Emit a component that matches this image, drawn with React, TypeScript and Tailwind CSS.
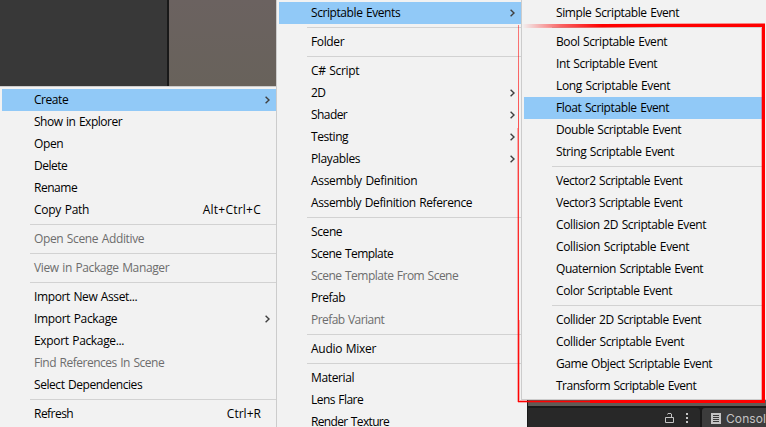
import React from "react";

type Item = { label: string; w: number; key?: string; sub?: boolean; off?: boolean; on?: boolean } | null;

const assetMenu: Item[] = [
  { label: "Create", w: 34, sub: true, on: true },
  { label: "Show in Explorer", w: 88 },
  { label: "Open", w: 29 },
  { label: "Delete", w: 33 },
  { label: "Rename", w: 43 },
  { label: "Copy Path", w: 55, key: "Alt+Ctrl+C" },
  null,
  { label: "Open Scene Additive", w: 110, off: true },
  null,
  { label: "View in Package Manager", w: 135, off: true },
  null,
  { label: "Import New Asset...", w: 103 },
  { label: "Import Package", w: 83, sub: true },
  { label: "Export Package...", w: 90 },
  { label: "Find References In Scene", w: 130, off: true },
  { label: "Select Dependencies", w: 108 },
  null,
  { label: "Refresh", w: 39, key: "Ctrl+R" },
];

const createMenu: Item[] = [
  { label: "Scriptable Events", w: 89, sub: true, on: true },
  null,
  { label: "Folder", w: 33 },
  null,
  { label: "C# Script", w: 48 },
  { label: "2D", w: 14, sub: true },
  { label: "Shader", w: 36, sub: true },
  { label: "Testing", w: 37, sub: true },
  { label: "Playables", w: 49, sub: true },
  { label: "Assembly Definition", w: 106 },
  { label: "Assembly Definition Reference", w: 161 },
  null,
  { label: "Scene", w: 31 },
  { label: "Scene Template", w: 82 },
  { label: "Scene Template From Scene", w: 147, off: true },
  { label: "Prefab", w: 34 },
  { label: "Prefab Variant", w: 73, off: true },
  null,
  { label: "Audio Mixer", w: 65 },
  null,
  { label: "Material", w: 43 },
  { label: "Lens Flare", w: 52 },
  { label: "Render Texture", w: 78 },
];

const eventMenu: Item[] = [
  { label: "Simple Scriptable Event", w: 123 },
  null,
  { label: "Bool Scriptable Event", w: 111 },
  { label: "Int Scriptable Event", w: 101 },
  { label: "Long Scriptable Event", w: 114 },
  { label: "Float Scriptable Event", w: 113, on: true },
  { label: "Double Scriptable Event", w: 125 },
  { label: "String Scriptable Event", w: 118 },
  null,
  { label: "Vector2 Scriptable Event", w: 126 },
  { label: "Vector3 Scriptable Event", w: 126 },
  { label: "Collision 2D Scriptable Event", w: 150 },
  { label: "Collision Scriptable Event", w: 133 },
  { label: "Quaternion Scriptable Event", w: 147 },
  { label: "Color Scriptable Event", w: 116 },
  null,
  { label: "Collider 2D Scriptable Event", w: 145 },
  { label: "Collider Scriptable Event", w: 128 },
  { label: "Game Object Scriptable Event", w: 156 },
  { label: "Transform Scriptable Event", w: 140 },
];

/* Label whose letter spacing is fitted to its column width. */
function Label({ text, width }: { text: string; width: number }) {
  const ref = React.useRef<HTMLSpanElement>(null);
  const [gap, setGap] = React.useState(0);
  React.useLayoutEffect(() => {
    if (ref.current) setGap((width + 0.2 - ref.current.getBoundingClientRect().width) / text.length);
  }, [text, width]);
  return (
    <span ref={ref} className="whitespace-pre [word-spacing:0.8px]" style={{ letterSpacing: gap }}>
      {text}
    </span>
  );
}

function Menu({ items }: { items: Item[] }) {
  return (
    <div className="flex flex-col text-[12px] leading-[22px] text-black">
      {items.map((it, i) =>
        it === null ? (
          <div key={i} className="flex h-[7px] shrink-0 items-center pl-7">
            <div className="h-px flex-1 bg-[#d2d2d2]" />
          </div>
        ) : (
          <div
            key={i}
            className={`flex h-[22px] shrink-0 items-center pl-7 ${it.on ? "bg-[#91c9f7]" : ""} ${it.off ? "text-[#6d6d6d]" : ""}`}
          >
            <div className="flex flex-1 pl-1">
              <Label text={it.label} width={it.w} />
            </div>
            {it.key && (
              <div className="flex pr-[15px]">
                <Label text={it.key} width={it.key.length > 6 ? 58 : 34} />
              </div>
            )}
            {it.sub && (
              <svg className="mr-[6px] h-2 w-[5px]" viewBox="0 0 5 8" fill="none" stroke="#404040" strokeWidth="1.4">
                <path d="M.6.7 4 4 .6 7.3" />
              </svg>
            )}
          </div>
        ),
      )}
    </div>
  );
}

export default function App() {
  return (
    <div className="relative flex h-[427px] w-[766px] overflow-hidden bg-[#f2f2f2] font-['Open_Sans','Noto_Sans',sans-serif]">
      <div className="flex w-[276px] shrink-0 flex-col">
        <div className="flex h-[86px] shrink-0">
          <div className="w-[167px] bg-[#383838]" />
          <div className="w-[2px] bg-[#191919]" />
          <div className="flex-1 bg-linear-to-b from-[#6b6260] to-[#68625b]" />
        </div>
        <div className="h-px shrink-0 bg-[#cccccc]" />
        <div className="shrink-0 pt-[2px] pl-[2px]">
          <Menu items={assetMenu} />
        </div>
      </div>

      <div className="w-[245px] shrink-0 border-l border-[#cccccc] pt-[2px] pl-[2px]">
        <Menu items={createMenu} />
      </div>

      <div className="flex w-[245px] shrink-0 flex-col">
        <div className="h-[400px] shrink-0 border-b border-l border-[#cccccc] pt-[2px] pr-1 pl-[2px]">
          <Menu items={eventMenu} />
        </div>
        <div className="flex min-h-0 flex-1">
          <div className="w-[6px] bg-[#f2f2f2]" />
          <div className="flex flex-1 flex-col overflow-hidden bg-[#191919] pl-px">
            <div className="h-[6px] shrink-0 bg-[#605b56]" />
            <div className="flex flex-1 gap-[2px] pt-[2px]">
              <div className="flex w-[172px] shrink-0 items-center justify-end gap-[12px] rounded-tr-[3px] bg-[#282828] pr-[12px]">
                <svg className="h-3 w-[9px]" viewBox="0 0 9 12" fill="none" stroke="#c4c4c4">
                  <path d="M.5 5.5h8v5h-8zM2.5 2.5v-.5l.5-.5h3l.5.5v3.5" />
                </svg>
                <svg className="h-3 w-[2px]" viewBox="0 0 2 12" fill="#c4c4c4">
                  <path d="M0 1h2v2H0zM0 5h2v2H0zM0 9h2v2H0z" />
                </svg>
              </div>
              <div className="flex min-w-0 flex-1 items-center gap-[5px] rounded-tl-[3px] bg-[#3c3c3c] pl-[9px] font-['Inter',sans-serif] text-[12px] text-[#c4c4c4]">
                <svg className="h-[11px] w-[10px] shrink-0" viewBox="0 0 10 11">
                  <path fill="#c4c4c4" d="M0 0h10v11H0z" />
                  <path stroke="#3c3c3c" d="M2 2.5h6M2 4.5h6M2 6.5h6M2 8.5h6" />
                </svg>
                <span className="pt-[2px] tracking-[0.1px]">Console</span>
              </div>
            </div>
          </div>
        </div>
      </div>

      {/* Hand-drawn red highlight over the event list */}
      <svg className="absolute inset-0 h-[427px] w-[766px]" viewBox="0 0 766 427" fill="none">
        <defs>
          <linearGradient id="fadeX" gradientUnits="userSpaceOnUse" x1="522" x2="602" y1="0" y2="0">
            <stop stopColor="#f00" stopOpacity="0" />
            <stop offset=".5" stopColor="#f00" stopOpacity=".6" />
            <stop offset="1" stopColor="#f00" />
          </linearGradient>
          <linearGradient id="fadeY" gradientUnits="userSpaceOnUse" x1="0" x2="0" y1="25" y2="403">
            <stop stopColor="#f00" stopOpacity=".5" />
            <stop offset=".5" stopColor="#f00" stopOpacity=".8" />
            <stop offset="1" stopColor="#f00" />
          </linearGradient>
        </defs>
        <path fill="url(#fadeX)" d="M522 24h80l60-.3 103-.2V27H662l-60 .5-80 .5z" />
        <path fill="#f00" d="M762 24h3v379H590v-1h-72v-1h72v-1h172z" />
        <path fill="url(#fadeY)" d="M518 25h1v377h-1z" />
        <path fill="#f00" fillOpacity=".3" d="M517 128h1v274h-1zM519 320h1v80h71v1h-72zM518 402h72v1h-72zM761 28h1v372h-1z" />
      </svg>
    </div>
  );
}
